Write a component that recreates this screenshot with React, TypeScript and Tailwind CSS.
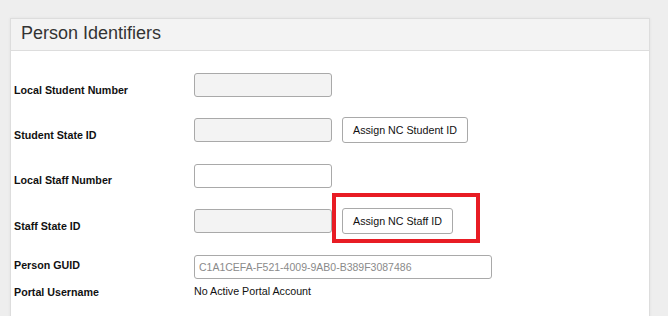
import React from "react";

const font = { fontFamily: '"Liberation Sans", Arial, sans-serif' };

function Label({ children, className = "" }: { children: React.ReactNode; className?: string }) {
  return (
    <div className={`w-[180px] shrink-0 text-[10.7px] leading-[13px] font-bold text-[#111] ${className}`}>
      {children}
    </div>
  );
}

function TextBox({ disabled = false }: { disabled?: boolean }) {
  return (
    <div
      className={`w-[138px] h-[24px] rounded-[3px] border border-[#a9a9a9] ${
        disabled ? "bg-[#f3f3f3]" : "bg-white"
      }`}
    />
  );
}

function AssignButton({ children, width }: { children: React.ReactNode; width: string }) {
  return (
    <button
      className={`${width} h-[26px] ml-[10px] rounded-[3px] border border-[#a9a9a9] bg-white text-[10.7px] text-[#111] text-left pl-[10px]`}
    >
      {children}
    </button>
  );
}

export default function App() {
  return (
    <div className="w-[668px] h-[316px] bg-[#eeeeee] overflow-hidden pt-[18px] pl-[10px] pr-[18px]" style={font}>
      <div className="relative h-[320px] bg-white border border-[#dddddd] shadow-[0_0_3px_rgba(0,0,0,0.06)]">
        <div className="h-[32px] bg-[#f3f3f3] border-b border-[#dddddd] pl-[10px] pt-[4px] text-[18px] leading-[20px] text-[#333]">
          Person Identifiers
        </div>

        <div className="pl-[3px]">
          <div className="flex items-start mt-[22px]">
            <Label className="pt-[11px]">Local Student Number</Label>
            <TextBox disabled />
          </div>

          <div className="flex items-start mt-[20px]">
            <Label className="pt-[12px]">Student State ID</Label>
            <div className="mt-[1px]">
              <TextBox disabled />
            </div>
            <AssignButton width="w-[126px]">Assign NC Student ID</AssignButton>
          </div>

          <div className="flex items-start mt-[21px]">
            <Label className="pt-[10px]">Local Staff Number</Label>
            <TextBox />
          </div>

          <div className="flex items-start mt-[20px]">
            <Label className="pt-[12px]">Staff State ID</Label>
            <div className="mt-[1px]">
              <TextBox disabled />
            </div>
            <AssignButton width="w-[111px]">Assign NC Staff ID</AssignButton>
          </div>

          <div className="flex items-start mt-[21px]">
            <Label className="pt-[4px]">Person GUID</Label>
            <div className="w-[298px] h-[24px] rounded-[3px] border border-[#a9a9a9] bg-white pl-[4px] text-[10.5px] leading-[22px] text-[#8a8a8a]">
              C1A1CEFA-F521-4009-9AB0-B389F3087486
            </div>
          </div>

          <div className="flex items-start mt-[6px]">
            <Label className="pt-[1px]">Portal Username</Label>
            <div className="text-[10.7px] leading-[13px] text-[#111]">No Active Portal Account</div>
          </div>
        </div>

        {/* annotation box around the staff button */}
        <div className="absolute left-[321px] top-[174px] w-[148px] h-[50px] border-4 border-[#e81c24]" />
      </div>
    </div>
  );
}
